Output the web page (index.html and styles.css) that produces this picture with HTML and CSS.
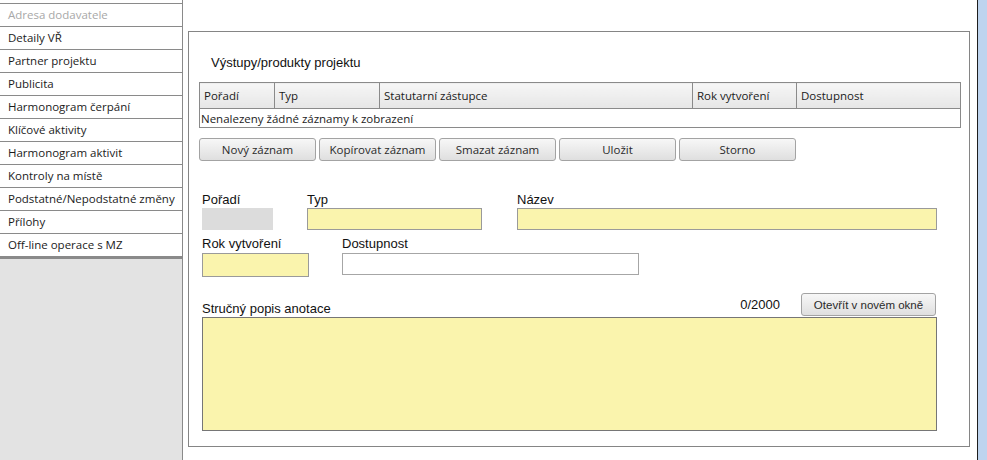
FILE: index.html
```html
<!DOCTYPE html>
<html lang="cs">
<head>
<meta charset="utf-8">
<title>Výstupy/produkty projektu</title>
<link rel="stylesheet" href="styles.css">
</head>
<body>
<div class="app">
  <nav class="sidebar">
    <ul class="menu">
      <li class="menu-item partial"></li>
      <li class="menu-item disabled">Adresa dodavatele</li>
      <li class="menu-item">Detaily VŘ</li>
      <li class="menu-item">Partner projektu</li>
      <li class="menu-item">Publicita</li>
      <li class="menu-item">Harmonogram čerpání</li>
      <li class="menu-item">Klíčové aktivity</li>
      <li class="menu-item">Harmonogram aktivit</li>
      <li class="menu-item">Kontroly na místě</li>
      <li class="menu-item">Podstatné/Nepodstatné změny</li>
      <li class="menu-item">Přílohy</li>
      <li class="menu-item last">Off-line operace s MZ</li>
    </ul>
  </nav>
  <main class="main">
    <section class="panel">
      <h2 class="panel-title">Výstupy/produkty projektu</h2>
      <table class="grid">
        <colgroup>
          <col class="c-poradi"><col class="c-typ"><col class="c-stat"><col class="c-rok"><col>
        </colgroup>
        <thead>
          <tr>
            <th>Pořadí</th>
            <th>Typ</th>
            <th>Statutarní zástupce</th>
            <th>Rok vytvoření</th>
            <th>Dostupnost</th>
          </tr>
        </thead>
        <tbody>
          <tr><td colspan="5">Nenalezeny žádné záznamy k zobrazení</td></tr>
        </tbody>
      </table>
      <div class="toolbar">
        <button class="btn">Nový záznam</button>
        <button class="btn">Kopírovat záznam</button>
        <button class="btn">Smazat záznam</button>
        <button class="btn">Uložit</button>
        <button class="btn">Storno</button>
      </div>
      <div class="form">
        <div class="form-row row-1">
          <div class="field f-poradi">
            <label class="label">Pořadí</label>
            <div class="input readonly"></div>
          </div>
          <div class="field f-typ">
            <label class="label">Typ</label>
            <div class="input required"></div>
          </div>
          <div class="field f-nazev">
            <label class="label">Název</label>
            <div class="input required"></div>
          </div>
        </div>
        <div class="form-row row-2">
          <div class="field f-rok">
            <label class="label">Rok vytvoření</label>
            <div class="input required tall"></div>
          </div>
          <div class="field f-dost">
            <label class="label">Dostupnost</label>
            <div class="input plain"></div>
          </div>
        </div>
        <div class="memo-head">
          <label class="label memo-label">Stručný popis anotace</label>
          <span class="counter">0/2000</span>
          <button class="btn btn-open">Otevřít v novém okně</button>
        </div>
        <div class="memo"></div>
      </div>
    </section>
  </main>
  <div class="scrollstrip"></div>
</div>
</body>
</html>
```

FILE: styles.css
```css
* { box-sizing: border-box; }

html, body {
  margin: 0;
  padding: 0;
  height: 100%;
  background: #fff;
}

body {
  font-family: "Open Sans", "Noto Sans", sans-serif;
  font-size: 11.5px;
  color: #1b1b1b;
  overflow: hidden;
}

.app {
  display: flex;
  height: 460px;
}

/* Sidebar */
.sidebar {
  width: 183px;
  flex: 0 0 183px;
  background: #e3e3e3;
  border-right: 1px solid #8a8a8a;
}

.menu {
  list-style: none;
  margin: 0;
  padding: 0;
}

.menu-item {
  height: 23px;
  line-height: 22px;
  padding-left: 8px;
  background: #fff;
  border-bottom: 1px solid #8a8a8a;
  white-space: nowrap;
}

.menu-item.partial { height: 4px; }
.menu-item.disabled { color: #a8a8a8; }
.menu-item.last {
  height: 25px;
  border-bottom-width: 3px;
}

/* Main */
.main {
  flex: 1 1 auto;
  padding: 31px 7px 0 5px;
}

.panel {
  border: 1px solid #858585;
  height: 416px;
  padding: 23px 8px 0 10px;
}

.panel-title {
  margin: 0 0 12px 12px;
  font-family: "Liberation Sans", Arial, sans-serif;
  font-weight: normal;
  font-size: 13px;
  line-height: 15px;
  color: #111;
}

/* Grid */
.grid {
  width: 762px;
  border-collapse: collapse;
  table-layout: fixed;
  border: 1px solid #8a8a8a;
}

.c-poradi { width: 75px; }
.c-typ { width: 105px; }
.c-stat { width: 313px; }
.c-rok { width: 104px; }

.grid th {
  height: 26px;
  padding: 0 4px;
  text-align: left;
  font-weight: normal;
  background: linear-gradient(#f6f6f6, #e6e6e6);
  border: 1px solid #8a8a8a;
  white-space: nowrap;
  overflow: hidden;
}

.grid td {
  height: 19px;
  padding: 0 1px;
  border: 1px solid #8a8a8a;
  white-space: nowrap;
}

/* Buttons */
.toolbar {
  display: flex;
  gap: 3px;
  margin-top: 10px;
}

.btn {
  width: 117px;
  height: 23px;
  padding: 0;
  font-family: inherit;
  font-size: 11.5px;
  color: #2a2a2a;
  background: linear-gradient(#f7f7f7, #dfdfdf);
  border: 1px solid #a3a3a3;
  border-radius: 3px;
}

/* Form */
.form {
  padding-left: 3px;
  font-family: "Liberation Sans", Arial, sans-serif;
  font-size: 13px;
}

.form-row {
  display: flex;
  align-items: flex-start;
}

.row-1 { margin-top: 31px; gap: 34px; }
.row-2 { margin-top: 6px; gap: 32px; }

.label {
  display: block;
  line-height: 15px;
  color: #111;
}

.input {
  height: 22px;
  margin-top: 1px;
  border: 1px solid #9a9a9a;
}

.row-2 .input { margin-top: 2px; }

.readonly {
  background: #dcdcdc;
  border-color: #dcdcdc;
}

.required { background: #faf4ad; }
.plain { background: #fff; border-color: #a6a6a6; }
.tall { height: 24px; }

.f-poradi { width: 71px; }
.f-typ { width: 175px; }
.f-nazev { width: 420px; }
.f-rok { width: 107px; }
.f-dost { width: 297px; }

.row-1 .f-nazev { margin-left: 1px; }
.row-2 .f-dost { margin-left: 1px; }

.memo-head {
  display: flex;
  align-items: center;
  width: 734px;
  margin-top: 16px;
}

.memo-label {
  align-self: flex-end;
  flex: 1 1 auto;
}

.counter {
  margin-right: 21px;
  line-height: 15px;
  color: #111;
}

.btn-open {
  width: 135px;
  height: 23px;
}

.memo {
  width: 735px;
  height: 114px;
  margin-top: 1px;
  background: #faf4ad;
  border: 1px solid #767676;
}

/* Right strip */
.scrollstrip {
  flex: 0 0 10px;
  background: #bed4ee;
  border-left: 1px solid #1e1e1e;
}
```
